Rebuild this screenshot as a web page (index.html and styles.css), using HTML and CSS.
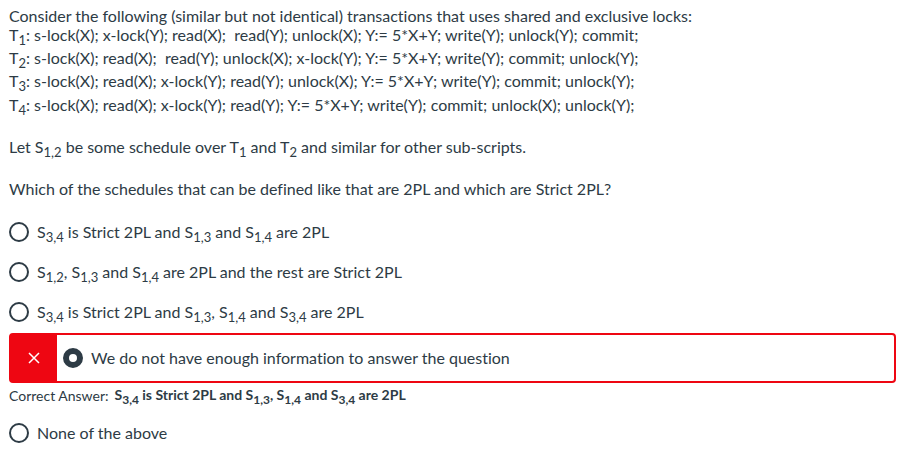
FILE: index.html
```
<!DOCTYPE html>
<html lang="en">
<head>
<meta charset="utf-8">
<title>Quiz question</title>
<link rel="stylesheet" href="styles.css">
</head>
<body>
<main class="question">
  <div class="prompt">
    <p>Consider the following (similar but not identical) transactions that uses shared and exclusive locks:<br>
    T<sub>1</sub>: s-lock(X); x-lock(Y); read(X);&nbsp; read(Y); unlock(X); Y:= 5*X+Y; write(Y); unlock(Y); commit;<br>
    T<sub>2</sub>: s-lock(X); read(X);&nbsp; read(Y); unlock(X); x-lock(Y); Y:= 5*X+Y; write(Y); commit; unlock(Y);<br>
    T<sub>3</sub>: s-lock(X); read(X); x-lock(Y); read(Y); unlock(X); Y:= 5*X+Y; write(Y); commit; unlock(Y);<br>
    T<sub>4</sub>: s-lock(X); read(X); x-lock(Y); read(Y); Y:= 5*X+Y; write(Y); commit; unlock(X); unlock(Y);</p>
    <p>Let S<sub>1,2</sub> be some schedule over T<sub>1</sub> and T<sub>2</sub> and similar for other sub-scripts.</p>
    <p>Which of the schedules that can be defined like that are 2PL and which are Strict 2PL?</p>
  </div>
  <div class="answers">
    <div class="answer">
      <input type="radio" name="answer" id="a1">
      <label for="a1">S<sub>3,4</sub> is Strict 2PL and S<sub>1,3</sub> and S<sub>1,4</sub> are 2PL</label>
    </div>
    <div class="answer">
      <input type="radio" name="answer" id="a2">
      <label for="a2">S<sub>1,2</sub>, S<sub>1,3</sub> and S<sub>1,4</sub> are 2PL and the rest are Strict 2PL</label>
    </div>
    <div class="answer">
      <input type="radio" name="answer" id="a3">
      <label for="a3">S<sub>3,4</sub> is Strict 2PL and S<sub>1,3</sub>, S<sub>1,4</sub> and S<sub>3,4</sub> are 2PL</label>
    </div>
    <div class="wrong">
      <div class="mark">
        <svg viewBox="0 0 12 12" width="12" height="12" aria-hidden="true"><path d="M1 1L11 11M11 1L1 11"/></svg>
      </div>
      <div class="answer chosen">
        <input type="radio" name="answer" id="a4" checked>
        <label for="a4">We do not have enough information to answer the question</label>
      </div>
    </div>
    <div class="correct">
      <span>Correct Answer:</span>
      <strong>S<sub>3,4</sub> is Strict 2PL and S<sub>1,3</sub>, S<sub>1,4</sub> and S<sub>3,4</sub> are 2PL</strong>
    </div>
    <div class="answer">
      <input type="radio" name="answer" id="a5">
      <label for="a5">None of the above</label>
    </div>
  </div>
</main>
</body>
</html>
```
FILE: styles.css
```
* { box-sizing: border-box; }
body {
  margin: 0;
  background: #fff;
  color: #2d3b45;
  font-family: Lato, sans-serif;
  font-size: 16px;
  line-height: 19px;
  font-variant-ligatures: none;
}
.question { padding: 6px 3px 0 9px; }
.prompt p { margin: 0 0 19px; }
.prompt p:last-child { margin-bottom: 14px; }
sub { font-size: 13px; line-height: 15px; }
.answer {
  display: flex;
  align-items: center;
  gap: 8px;
  height: 40px;
}
.answer sub { line-height: 0; }
.answer input {
  appearance: none;
  flex: none;
  width: 20px;
  height: 20px;
  margin: 0;
  border: 2px solid #2d3b45;
  border-radius: 50%;
  background: #fff;
}
.answer input:checked { border-width: 6px; }
.wrong {
  display: flex;
  height: 50px;
  margin-top: 1px;
  border: 2px solid #ee0612;
  border-radius: 4px;
}
.mark {
  display: flex;
  align-items: center;
  justify-content: center;
  width: 46px;
  background: #ee0612;
}
.mark path { stroke: #fff; stroke-width: 1.5; fill: none; }
.chosen { height: auto; padding-left: 6px; }
.correct {
  display: flex;
  align-items: center;
  gap: 6px;
  height: 30px;
  padding-bottom: 4px;
  font-size: 14px;
}
.correct sub { font-size: 12px; }
```
